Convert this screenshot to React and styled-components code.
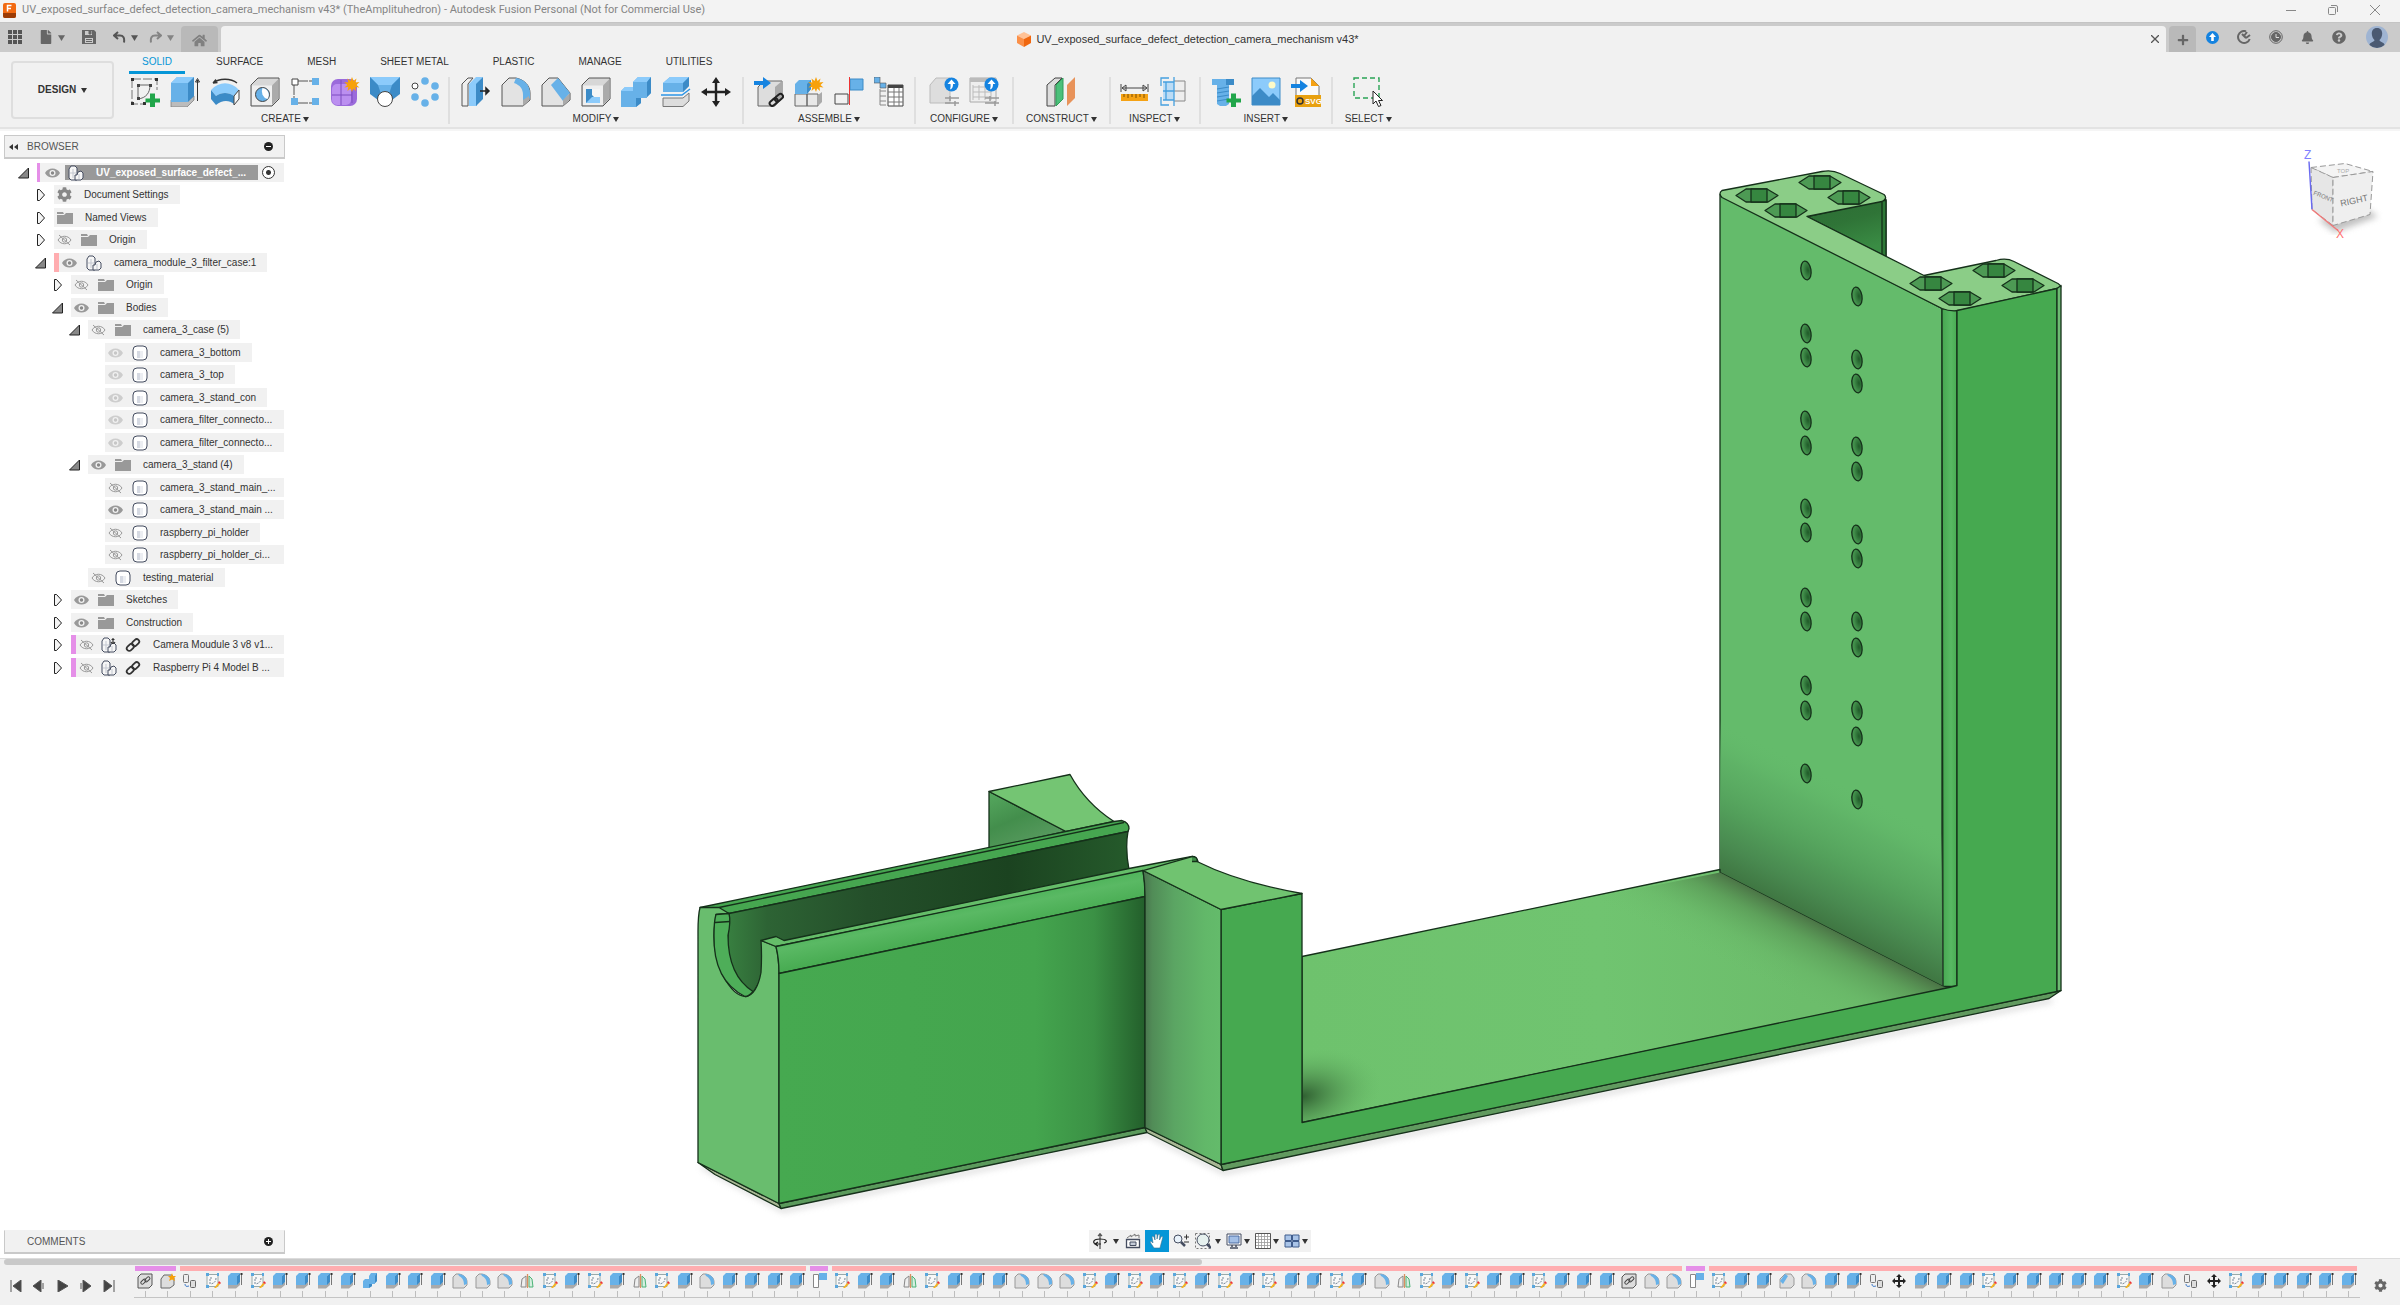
import React from 'react';
import styled, { createGlobalStyle } from 'styled-components';
import { FaBell, FaCog, FaQuestionCircle, FaHome, FaFile, FaPlus } from 'react-icons/fa';

const GlobalStyle = createGlobalStyle`
    * {
        box-sizing: border-box;
    }
    body {
        margin: 0;
        background: #fff;
        color: #333;
        font: 11px/14px 'Liberation Sans', Arial, sans-serif;
    }
    button {
        padding: 0;
        border: none;
        background: none;
        color: inherit;
        font: inherit;
        cursor: pointer;
    }
    svg {
        display: block;
        flex-shrink: 0;
    }
    ul {
        margin: 0;
        padding: 0;
        list-style: none;
    }
`;

const Page = styled.div`
    display: flex;
    flex-direction: column;
    min-height: 100vh;
`;

/* ---------- title bar ---------- */

const TitleBar = styled.header`
    display: flex;
    align-items: center;
    height: 22px;
    padding: 0 20px 2px 3px;
    background: #f3f3f3;
    color: #858585;
    font: 11px/16px Roboto, 'Open Sans', sans-serif;
    .controls {
        display: flex;
        align-items: center;
        gap: 32px;
        margin-left: auto;
    }
`;

const TitleText = styled.span`
    margin-left: 6px;
`;

/* ---------- document tabs ---------- */

const TabStrip = styled.div`
    display: flex;
    align-items: stretch;
    height: 30px;
    padding-top: 3px;
    background: #cbcbcb;
    border-top: 1px solid #c4c4c4;
    color: #666;
`;

const QuickBar = styled.div`
    display: flex;
    align-items: center;
    width: 178px;
    padding: 0 0 4px 8px;
`;

const QuickButton = styled.button`
    display: flex;
    align-items: center;
    gap: 5px;
    margin-right: ${props => props.$gap || 17}px;
    opacity: ${props => (props.$faded ? 0.6 : 1)};
`;

const SquareTab = styled.button`
    display: flex;
    align-items: center;
    justify-content: center;
    width: ${props => props.$width}px;
    padding-top: 2px;
    border-radius: 4px 4px 0 0;
    background: #b9b9b9;
    color: ${props => props.$color};
    margin: 0 3px;
`;

const DocTab = styled.div`
    display: flex;
    flex: 1;
    align-items: center;
    border-radius: 4px 4px 0 0;
    background: #f1f1f1;
    color: #333;
    .name {
        display: flex;
        flex: 1;
        align-items: center;
        justify-content: center;
        gap: 5px;
        padding-left: 11px;
    }
    .close {
        display: flex;
        justify-content: center;
        width: 22px;
    }
`;

const AccountBar = styled.div`
    display: flex;
    align-items: center;
    gap: 18px;
    padding: 0 12px 4px 7px;
    .avatar {
        margin-left: 2px;
    }
`;

/* ---------- ribbon ---------- */

const Ribbon = styled.div`
    display: flex;
    height: 79px;
    padding: 3px 0 0 11px;
    background: #f1f1f1;
    border-bottom: 2px solid #f5f5f5;
    box-shadow: inset 0 -2px #e3e3e3;
`;

const DesignButton = styled.button`
    display: flex;
    align-items: center;
    justify-content: center;
    gap: 5px;
    width: 103px;
    height: 58px;
    margin: 6px 11px 0 0;
    border: 2px solid #dedede;
    border-radius: 4px;
    font-size: 10px;
    font-weight: bold;
`;

const ToolTabs = styled.nav`
    display: flex;
    gap: 18px;
    margin-left: 4px;
`;

const ToolTab = styled.button`
    height: 19px;
    padding: 0 13px 2px;
    font-size: 10px;
    line-height: 14px;
    white-space: nowrap;
    color: ${props => (props.$active ? '#0696d7' : '#333')};
    border-bottom: 3px solid ${props => (props.$active ? '#0696d7' : 'transparent')};
`;

const ToolGroups = styled.div`
    display: flex;
    margin-top: 3px;
`;

const ToolGroup = styled.section`
    display: flex;
    flex-direction: column;
    align-items: center;
    height: 47px;
    padding: 0 ${props => props.$pad}px;
    border-right: ${props => (props.$last ? 0 : 2)}px solid #dfdfdf;
    &:first-child {
        padding-right: 3px;
    }
    .icons {
        display: flex;
    }
`;

const ToolButton = styled.button`
    display: flex;
    justify-content: center;
    width: 40px;
    height: 31px;
`;

const GroupLabel = styled.button`
    display: flex;
    align-items: center;
    gap: 2px;
    margin-top: 4px;
    font-size: 10px;
    white-space: nowrap;
`;

/* ---------- workspace ---------- */

const Workspace = styled.main`
    display: grid;
    flex: 1;
    > * {
        grid-area: 1 / 1;
    }
`;

const Viewport = styled.svg`
    width: 100%;
    height: 100%;
`;

const Overlay = styled.div`
    display: flex;
    flex-direction: column;
    justify-content: space-between;
    padding: 4px;
`;

const PanelHeader = styled.div`
    display: flex;
    align-items: center;
    width: 281px;
    height: 24px;
    padding: 0 11px 0 ${props => (props.$plain ? 22 : 3)}px;
    border: 1px solid #c9c9c9;
    border-bottom-width: 2px;
    border-top-color: ${props => (props.$plain ? '#f1f1f1' : '#c9c9c9')};
    background: #f1f1f1;
    color: #555;
    gap: 8px;
    h2 {
        flex: 1;
        margin: 0;
        font-size: 10px;
        font-weight: normal;
    }
`;

const Tree = styled.ul`
    width: 280px;
    padding-top: 4px;
`;

const TreeRow = styled.li`
    display: flex;
    align-items: center;
    height: 19px;
    margin-bottom: 3px;
    padding-left: ${props => props.$level * 17 + 13}px;
    font-size: 10px;
    &:nth-child(even) {
        margin-bottom: 4px;
    }
`;

const Toggle = styled.button`
    display: flex;
    flex-shrink: 0;
    width: 20px;
    visibility: ${props => (props.$hidden ? 'hidden' : 'visible')};
`;

const Chip = styled.div`
    display: flex;
    flex: ${props => (props.$fill ? '1 1 0' : '0 0 auto')};
    align-items: center;
    min-width: 0;
    height: 19px;
    padding: 0 ${props => (props.$fill ? 9 : 11)}px 0 ${props => (props.$root ? 5 : 3)}px;
    border-left: ${props => (props.$stripe ? (props.$root ? 3 : 5) : 0)}px solid ${props => props.$stripe};
    background: #f1f1f1;
    white-space: nowrap;
`;

const EyeButton = styled.button`
    flex-shrink: 0;
    width: 15px;
    margin-right: ${props => (props.$near ? 7 : 9)}px;
`;

const LinkMark = styled.span`
    margin-left: 8px;
`;

const RowName = styled.span`
    margin-left: 12px;
`;

const RootName = styled.span`
    display: flex;
    flex: 1;
    align-items: center;
    height: 15px;
    margin: 0 4px 0 -4px;
    padding-left: 3px;
    background: #999;
    color: #fff;
    font-weight: bold;
`;

const ActiveRadio = styled.input`
    appearance: none;
    flex-shrink: 0;
    width: 13px;
    height: 13px;
    margin: 0;
    border: 1px solid #333;
    border-radius: 50%;
    background: radial-gradient(circle, #333 0 2px, #fff 3px);
`;

const BottomRow = styled.div`
    display: grid;
    grid-template-columns: 1fr auto 1fr;
    align-items: start;
    height: 24px;
`;

const NavBar = styled.div`
    display: flex;
    height: 22px;
    background: #f1f1f1;
`;

const NavButton = styled.button`
    display: flex;
    align-items: center;
    justify-content: center;
    gap: ${props => props.$gap || 2}px;
    width: ${props => props.$width}px;
    background: ${props => (props.$active ? '#0696d7' : 'transparent')};
`;

/* ---------- timeline ---------- */

const Timeline = styled.footer`
    height: 47px;
    background: #f1f1f1;
    border-top: 1px solid #dcdcdc;
`;

const ScrollTrack = styled.div`
    height: 6px;
    padding-left: 4px;
    .thumb {
        width: 50%;
        height: 6px;
        border-radius: 3px;
        background: #c9c9c9;
    }
`;

const TimelineBody = styled.div`
    display: grid;
    grid-template-columns: 134px 1fr 40px;
`;

const Playback = styled.div`
    display: flex;
    justify-content: space-between;
    height: 12px;
    margin-top: 15px;
    padding: 0 19px 0 10px;
`;

const Features = styled.div`
    display: grid;
    grid-template-columns: repeat(99, 1fr);
    padding-top: 1px;
`;

const Span = styled.div`
    grid-column: span ${props => props.$count};
    height: 5px;
    margin: 0 3px 0 1px;
    background: ${props => props.$color};
`;

const Feature = styled.button`
    display: flex;
    flex-direction: column;
    align-items: center;
    padding-top: 2px;
    border-bottom: 1px solid #c4c4c4;
    &::after {
        content: '';
        width: 1px;
        height: 6px;
        margin-top: 2px;
        background: #bdbdbd;
    }
`;

const GearButton = styled.button`
    display: flex;
    justify-content: center;
    height: 13px;
    margin-top: 14px;
    color: #666;
`;

/* ---------- icons ---------- */

const Caret = ({ size = 6, color = '#333' }) => (
    <svg width={size} height={size} viewBox="0 0 6 6"><path d="M0 1h6L3 6z" fill={color} /></svg>
);

const Svg = ({ size = 30, box = 30, children }) => (
    <svg width={size} height={size} viewBox={`0 0 ${box} ${box}`} fill="none">{children}</svg>
);

const BLUE = '#67b1e8';
const LIGHT = '#8ccbfb';
const DARK = '#3c8bc7';

const Star = () => (
    <path d="M22 0l1.500 4 3-2.500-1 4 4-.5-3 3 3 2.500-4-.5.5 4-2.800-2.500L22 15l-1.500-3.500-3 2.500.8-4-4 .5 3-2.500-3-3 4 .5-.8-4 3 2.500z" fill="#f7a10a" />
);
const Plus = () => <path d="M20 16.500h5v5h5v4h-5v4.500h-5v-4.500h-4.500v-4h4.500z" fill="#21a64a" />;
const Badge = () => (
    <>
        <circle cx="22.500" cy="7.500" r="7" fill="#1583e0" />
        <path d="M22.500 2.500l4 4.500h-2.500c0 3-.5 4.500-3 5.500.7-2 .7-3.500.5-5.500h-3z" fill="#fff" />
    </>
);
const GreyBody = () => (
    <>
        <path d="M1 29V8l7-7h21v21l-7 7z" fill="#d7d7d7" stroke="#555" />
        <path d="M2 28V8.500h20V28z" fill="#efefef" />
        <path d="M22 8.500L28.500 2v19.500L22 28z" fill="#aaa" />
    </>
);

const tools = {
    sketch: (
        <>
            <path d="M2 2h25v11M2 2v25h13" stroke="#777" strokeDasharray="9 2" />
            <path d="M1 1h3v3H1zM25 1h3v3h-3zM1 25h3v3H1zM13 25h3v3h-3z" fill="#333" />
            <path d="M8 9v13M8 8h13M20 8c0 8-4 13-12 14" stroke="#666" />
            <path d="M7 7h3v3H7zM19 7h3v3h-3zM7 20h3v3H7z" fill="#444" />
            <Plus />
        </>
    ),
    extrude: (
        <>
            <path d="M1 23h17l6-4v4l-7 7H1z" fill="#bcbcbc" stroke="#777" strokeWidth=".7" />
            <path d="M1 6l6-6h17l-6 6v19H1z" fill={BLUE} />
            <path d="M1 6l6-6h17l-6 6z" fill={LIGHT} />
            <path d="M18 6l6-6v19l-6 6z" fill={DARK} />
            <path d="M27.500 24V3M25.500 5l2-3.500 2 3.500z" stroke="#333" />
        </>
    ),
    revolve: (
        <>
            <path d="M3 6C9 1 21 1 27 6M3 6l3-3.500M3 6l4.500-.5" stroke="#333" strokeWidth="1.300" />
            <path d="M1 13C9 4 21 4 29 13l-5 6c-5-4-13-4-18 0z" fill={LIGHT} />
            <path d="M1 13l5 6v9l-5-6zM6 19c5-4 13-4 18 0v8c-5-4-12-4-18 1z" fill={DARK} />
            <path d="M24 19l5-6v9l-5 6z" fill="#f8f8f8" stroke="#444" />
        </>
    ),
    hole: (
        <>
            <GreyBody />
            <circle cx="12.500" cy="17.500" r="7" fill={BLUE} stroke="#444" />
            <path d="M12.500 11a7 7 0 0 1 5 11 8 8 0 0 1-5-11z" fill="#fff" />
        </>
    ),
    pattern: (
        <>
            <path d="M4 4h22M4 4v22M4 26h22" stroke="#555" strokeDasharray="14 1" />
            <path d="M2 2h6v6H2z" fill="#fff" stroke="#444" />
            <path d="M22 1h7v7h-7zM1 21h7v7H1zM22 21h7v7h-7z" fill={BLUE} />
        </>
    ),
    form: (
        <>
            <rect x="1" y="2" width="26" height="27" rx="7" fill="#9b6bdb" />
            <rect x="2" y="7" width="19" height="21" rx="5" fill="#bb8ff0" />
            <path d="M11 3v25M2 18h20M22 8v18" stroke="#7c4cc0" />
            <Star />
        </>
    ),
    loft: (
        <>
            <path d="M0 0h30L20 22H10z" fill={BLUE} />
            <path d="M0 0h30l-8 8H8z" fill={LIGHT} />
            <path d="M0 0l8 8 4 12-4 3L0 17zM30 0l-8 8-4 12 4 3 8-6z" fill={DARK} />
            <circle cx="15" cy="22" r="7.500" fill="#fff" stroke="#444" />
        </>
    ),
    circular: (
        <>
            <circle cx="5" cy="9" r="3" fill="#fff" stroke="#444" />
            <g fill={BLUE}>
                <circle cx="15" cy="4" r="3.800" /><circle cx="25" cy="9" r="3.800" /><circle cx="25" cy="20" r="3.800" />
                <circle cx="15" cy="26" r="3.800" /><circle cx="5" cy="20" r="3.800" />
            </g>
        </>
    ),
    press: (
        <>
            <path d="M1 29V7l6-6h5L7 7v22z" fill="#eee" stroke="#555" />
            <path d="M8 29V7l7-7h7l-6 7v22z" fill={LIGHT} />
            <path d="M15 7l7-7v22l-7 7z" fill={DARK} />
            <path d="M19 14h8M25 11l3 3-3 3z" stroke="#222" strokeWidth="1.500" />
        </>
    ),
    fillet: (
        <>
            <path d="M1 29V8l7-7h7c9 2 14 8 14 15v7l-7 6z" fill="#e3e3e3" stroke="#555" />
            <path d="M15 1c8 1 14 7 14 15v5l-7 3v-6c0-6-3-10-9-12z" fill={BLUE} />
            <path d="M22 23l6-4v4l-6 6z" fill="#aaa" />
        </>
    ),
    chamfer: (
        <>
            <path d="M1 29V8l7-7h9l12 15v7l-7 6z" fill="#e3e3e3" stroke="#555" />
            <path d="M10 8l7-7 12 15-7 8z" fill={BLUE} />
            <path d="M22 23l6-6v6l-6 6z" fill="#aaa" />
        </>
    ),
    shell: (
        <>
            <GreyBody />
            <path d="M5 12h14v14H5z" fill={DARK} />
            <path d="M11 12h8v9h-5l-3-3z" fill="#f5f5f5" />
            <path d="M5 26l6-6h8v6z" fill={LIGHT} />
        </>
    ),
    combine: (
        <>
            <path d="M0 30V14l4-4h8V5l5-5h13v16l-5 5h-5v5l-5 4z" fill={BLUE} />
            <path d="M12 5l5-5h13l-4 5zM0 14l4-4h8v4z" fill={LIGHT} />
            <path d="M26 5l4-5v16l-5 5h-5v5l-5 4V21h11z" fill={DARK} />
        </>
    ),
    split: (
        <>
            <path d="M2 6l7-6h19v9l-6 6H2z" fill={BLUE} />
            <path d="M2 6l7-6h19l-6 6z" fill={LIGHT} />
            <path d="M22 6l6-6v9l-6 6z" fill={DARK} />
            <path d="M0 18h21l8-6" stroke="#2c95e6" strokeWidth="1.500" />
            <path d="M2 21h20l6-5v8l-6 5.500H2z" fill="#ddd" stroke="#777" />
        </>
    ),
    move: (
        <path d="M15 0l4 6h-2.800v7.800H24V11l6 4-6 4v-2.800h-7.800V24H19l-4 6-4-6h2.800v-7.800H6V19l-6-4 6-4v2.800h7.800V6H11z" fill="#222" />
    ),
    insertPart: (
        <>
            <path d="M4 29V10l6-6h18v17l-7 8z" fill="#ddd" stroke="#666" />
            <path d="M21 10l7-6v17l-7 8z" fill="#aaa" />
            <path d="M0 4h9V0l8 6-8 6V8H0z" fill="#1583e0" />
            <g stroke="#222" strokeWidth="2"><rect x="15" y="23" width="9" height="5" rx="2.500" transform="rotate(-40 19 25)" /><rect x="20" y="18" width="9" height="5" rx="2.500" transform="rotate(-40 25 20)" /></g>
        </>
    ),
    newPart: (
        <>
            <path d="M1 17h12v12H1zM13 17h11v12H13z" fill="#e8e8e8" stroke="#666" />
            <path d="M24 18l4-3v10l-4 4z" fill="#aaa" />
            <path d="M1 7l4-4h12v9l-4 5H1z" fill={BLUE} />
            <path d="M13 7l4-4v9l-4 5z" fill={DARK} />
            <Star />
        </>
    ),
    joint: (
        <>
            <path d="M16 2h13v11H16z" fill={BLUE} stroke={DARK} />
            <path d="M1 17h13v10H1z" stroke="#444" />
            <path d="M15.500 0v28" stroke="#e33" />
        </>
    ),
    table: (
        <>
            <path d="M0 0h6v6H0zM6 6h6v5H6z" fill={BLUE} stroke="#555" strokeWidth=".6" />
            <path d="M6 12v16M6 14h6M6 19h6M6 24h6M6 28h6" stroke="#888" />
            <path d="M14 8h15v21H14z" fill="#fff" stroke="#444" />
            <path d="M14 8h15v3H14z" fill="#444" />
            <path d="M14 15h15M14 20h15M14 25h15M20 11v18M25 11v18" stroke="#777" />
        </>
    ),
    configure: (
        <>
            <path d="M1 26V8l6-7h14v25z" fill="#ddd" stroke="#bbb" />
            <path d="M16 21h14M16 26h14M21 19v5M26 24v5" stroke="#999" strokeWidth="1.500" />
            <Badge />
        </>
    ),
    configTable: (
        <>
            <path d="M1 1h26v24H1z" fill="#eee" stroke="#aaa" />
            <path d="M1 1h26v4H1z" fill="#bbb" />
            <path d="M4 10h18M4 15h18M4 20h18M4 8v15M10 8v15M16 8v15M22 8v15" stroke="#bbb" />
            <path d="M16 21h14M16 26h14M21 19v5M26 24v5" stroke="#999" strokeWidth="1.500" />
            <Badge />
        </>
    ),
    plane: (
        <>
            <path d="M1 8l8-7h7L9 8v21H1z" fill="#ddd" stroke="#444" />
            <path d="M10 8l7-7v21l-7 7z" fill="#4bc07a" stroke="#2f9d59" />
            <path d="M21 8l8-8v21l-8 8z" fill="#e8935a" />
        </>
    ),
    measure: (
        <>
            <path d="M1 7v8M28 7v8M2 11h25M6 8l-4 3 4 3zM23 8l4 3-4 3z" stroke="#444" />
            <path d="M1 17h27v7H1z" fill="#f5a214" />
            <path d="M4 17v3M8 17v4M12 17v3M16 17v4M20 17v3M24 17v4" stroke="#7a4d00" />
        </>
    ),
    section: (
        <>
            <path d="M14 4h11v20H14M14 14h11" fill="#eee" stroke="#888" />
            <path d="M3 5h11v18H3z" fill="#bcdcf5" />
            <path d="M9 1H1v8M1 20v8h8M14 0v29M3 5h11M3 14h11M3 23h11M6 5v18" stroke="#45a0df" strokeWidth="1.300" />
        </>
    ),
    bolt: (
        <>
            <path d="M1 2h22v6H1z" fill={BLUE} />
            <path d="M15 2h8v6h-8z" fill={DARK} />
            <path d="M6 8h12v19l-3 2H9l-3-2z" fill={BLUE} />
            <path d="M6 12l12-2M6 16l12-2M6 20l12-2M6 24l12-2" stroke={DARK} />
            <Plus />
        </>
    ),
    image: (
        <>
            <path d="M1 1h28v27H1z" fill={LIGHT} stroke={DARK} />
            <circle cx="21" cy="8" r="3.500" fill="#fdfbc8" />
            <path d="M1 19l8-8 9 9 4-4 7 7v5H1z" fill={DARK} />
        </>
    ),
    svgFile: (
        <>
            <path d="M5 1h15l8 8v18H5z" fill="#fafafa" stroke="#777" />
            <path d="M20 1l8 8h-8z" fill="#f5a214" />
            <path d="M0 7h9V3l8 6-8 6v-4H0z" fill="#1583e0" />
            <rect x="4" y="18" width="26" height="12" fill="#e8a110" />
            <circle cx="9" cy="24" r="3" stroke="#333" strokeWidth="1.500" />
            <text x="14" y="27" fontSize="8" fontWeight="bold" fill="#fff">SVG</text>
        </>
    ),
    select: (
        <>
            <path d="M1 1h25v20H1z" stroke="#2aa455" strokeWidth="1.400" strokeDasharray="5 3" />
            <path d="M20 14v13l3-3 2.500 5.500 2.500-1-2.500-5h4z" fill="#fff" stroke="#222" />
        </>
    ),
};

// small feature icons of the timeline
const features = {
    L: (
        <>
            <path d="M1 15V4l3-3h11v11l-3 3z" fill="#ddd" stroke="#555" />
            <g stroke="#444"><rect x="3.500" y="7.500" width="6" height="3" rx="1.500" transform="rotate(-45 6 9)" /><rect x="7" y="5" width="6" height="3" rx="1.500" transform="rotate(-45 10 6)" /></g>
        </>
    ),
    N: (
        <>
            <path d="M1 15V6l3-4h8l2 3v7l-4 3z" fill="#ddd" stroke="#666" />
            <path d="M12 0l1 3h3l-2 2 1 3-3-1.500L9 8l1-3-2-2h3z" fill="#f7a10a" />
        </>
    ),
    C: (
        <>
            <rect x="1.500" y="1.500" width="5" height="8" rx="1" fill="#eee" stroke="#777" />
            <rect x="8.500" y="7.500" width="5" height="7" rx="1" fill="#ddd" stroke="#666" />
            <path d="M3 11c0 2 1 3 4 2" stroke="#3d79c8" />
        </>
    ),
    S: (
        <>
            <path d="M2 1.500h11v12H2z" fill="#f8f8f8" stroke="#9aa" />
            <path d="M1 0h3v3H1zM12 0h2v3h-2zM1 12h3v3H1z" fill="#5aa7dd" />
            <path d="M5 11V5h3M11 5c0 4-2 5-5 6" stroke="#789" strokeDasharray="2 1" />
            <path d="M9 15l4-5 2 1-4 4z" fill="#f6b420" />
            <path d="M13 10l1-2 2 2-1 1z" fill="#e33" />
        </>
    ),
    E: (
        <>
            <path d="M1 11h9l3-2v3l-4 3.500H1z" fill="#aaa" />
            <path d="M1 3l3-3h9l-3 3v9H1z" fill={BLUE} />
            <path d="M10 3l3-3v9l-3 3z" fill={DARK} />
            <path d="M14.500 2v10" stroke="#777" />
            <path d="M13.500 0h2v2h-2z" fill="#333" />
        </>
    ),
    B: (
        <>
            <path d="M1 15V8l2-2h4V3l2-3h6v8l-3 3h-2v2l-3 2z" fill={BLUE} />
            <path d="M13 3l2-3v8l-3 3h-2v2l-3 2v-4h6z" fill={DARK} />
        </>
    ),
    F: (
        <>
            <path d="M1 15V4l3-3h3c5 1 8 4 8 8v3l-3 3z" fill="#ddd" stroke="#999" />
            <path d="M6 1c6 0 9 4 9 8v2l-3 1c0-4-1-7-5-9z" fill={BLUE} />
        </>
    ),
    H: (
        <>
            <path d="M1 15V6l5-5h6l3 4v7l-3 3z" fill="#ddd" stroke="#999" />
            <path d="M1 8l5-7 3 2-5 8z" fill={BLUE} />
        </>
    ),
    M: (
        <>
            <path d="M2 14l1-8 4-3v11z" fill="#eee" stroke="#888" />
            <path d="M10 3l3 3 1 8h-4z" fill="#d5eedf" stroke="#4bb377" />
            <path d="M8.500 1v14" stroke="#d9905f" strokeWidth="1.300" />
        </>
    ),
    J: (
        <>
            <path d="M7 0h8v7H7z" fill={BLUE} />
            <path d="M1.500 1.500h5v13h-5z" fill="#fff" stroke="#888" />
        </>
    ),
    V: <path d="M8 1l3 3H9v3h3V5l3 3-3 3V9H9v3h2l-3 3-3-3h2V9H4v2L1 8l3-3v2h3V4H5z" fill="#222" />,
};

const Folder = () => (
    <Svg size={16} box={16}><path d="M0 2h6l1 2H0zM0 5h7l2-2h7v11H0z" fill="#999" /></Svg>
);
const Body = () => (
    <Svg size={16} box={16}>
        <rect x="1" y="1" width="14" height="14" rx="4" fill="#fff" stroke="#454d60" />
        <path d="M5 6h6v7H5z" fill="#d5d9e2" />
        <path d="M8 6h3v7H8z" fill="#eceef2" />
    </Svg>
);
const Component = ({ anchor }) => (
    <Svg size={16} box={16}>
        <path d="M1 4l2-3h4l2 2v12H3l-2-2z" fill="#f6f6f6" stroke="#454d60" />
        <path d="M7 10h2l1-3 3-1 2 2v5l-2 2H7z" fill="#f6f6f6" stroke="#454d60" />
        <path d="M5 4v9M2 8h6M11 9v5" stroke="#c3c7d0" />
        {anchor && <path d="M12 1v6M10 5c1 2 3 2 4 0M10.500 2.500h3" stroke="#333" strokeWidth="1.200" />}
    </Svg>
);
const Link = () => (
    <svg width="16" height="16" viewBox="0 0 16 16" fill="none" stroke="#333" strokeWidth="1.800">
        <rect x="1" y="8" width="8" height="5" rx="2.500" transform="rotate(-45 5 10)" />
        <rect x="7" y="3" width="8" height="5" rx="2.500" transform="rotate(-45 11 6)" />
    </svg>
);
const Eye = ({ state }) => (
    <Svg size={15} box={15}>
        {state === 'off' ? (
            <g stroke="#999">
                <path d="M1 8c3-5 10-5 13 0-3 5-10 5-13 0zM2 3l11 10" />
                <circle cx="7.500" cy="8" r="2.200" />
            </g>
        ) : (
            <g opacity={state === 'dim' ? 0.4 : 1}>
                <path d="M0 8c3-6 12-6 15 0-3 6-12 6-15 0z" fill="#999" />
                <circle cx="7.500" cy="8" r="3" fill="#f1f1f1" />
                <circle cx="7.500" cy="8" r="1.700" fill="#888" />
            </g>
        )}
    </Svg>
);
const Arrow = ({ open }) => (
    <Svg size={12} box={12}>
        {open
            ? <path d="M11.500 1v10h-10z" fill="#888" stroke="#222" />
            : <path d="M3.500.5h2l5 5.500-5 5.500h-2z" fill="#f4f4f4" stroke="#222" />}
    </Svg>
);

const rowIcons = {
    folder: <Folder />,
    body: <Body />,
    component: <Component />,
    anchored: <Component anchor />,
    gear: <FaCog size={15} color="#888" />,
};

/* ---------- data ---------- */

const tabs = ['SOLID', 'SURFACE', 'MESH', 'SHEET METAL', 'PLASTIC', 'MANAGE', 'UTILITIES'];

const groups = [
    { name: 'CREATE', pad: 0, icons: ['sketch', 'extrude', 'revolve', 'hole', 'pattern', 'form', 'loft', 'circular'] },
    { name: 'MODIFY', pad: 6, icons: ['press', 'fillet', 'chamfer', 'shell', 'combine', 'split', 'move'] },
    { name: 'ASSEMBLE', pad: 5, icons: ['insertPart', 'newPart', 'joint', 'table'] },
    { name: 'CONFIGURE', pad: 8, icons: ['configure', 'configTable'] },
    { name: 'CONSTRUCT', pad: 12, icons: ['plane'] },
    { name: 'INSPECT', pad: 4, icons: ['measure', 'section'] },
    { name: 'INSERT', pad: 5, icons: ['bolt', 'image', 'svgFile'] },
    { name: 'SELECT', pad: 12, icons: ['select'] },
];

const PINK = '#ffadb0';
const PURPLE = '#e58fe8';

const rows = [
    { level: 1, arrow: 'closed', icon: 'gear', name: 'Document Settings' },
    { level: 1, arrow: 'closed', icon: 'folder', name: 'Named Views' },
    { level: 1, arrow: 'closed', eye: 'off', icon: 'folder', name: 'Origin' },
    { level: 1, arrow: 'open', eye: 'on', icon: 'component', name: 'camera_module_3_filter_case:1', stripe: PINK },
    { level: 2, arrow: 'closed', eye: 'off', icon: 'folder', name: 'Origin' },
    { level: 2, arrow: 'open', eye: 'on', icon: 'folder', name: 'Bodies' },
    { level: 3, arrow: 'open', eye: 'off', icon: 'folder', name: 'camera_3_case (5)' },
    { level: 4, eye: 'dim', icon: 'body', name: 'camera_3_bottom' },
    { level: 4, eye: 'dim', icon: 'body', name: 'camera_3_top' },
    { level: 4, eye: 'dim', icon: 'body', name: 'camera_3_stand_con' },
    { level: 4, eye: 'dim', icon: 'body', name: 'camera_filter_connecto...', fill: true },
    { level: 4, eye: 'dim', icon: 'body', name: 'camera_filter_connecto...', fill: true },
    { level: 3, arrow: 'open', eye: 'on', icon: 'folder', name: 'camera_3_stand (4)' },
    { level: 4, eye: 'off', icon: 'body', name: 'camera_3_stand_main_...', fill: true },
    { level: 4, eye: 'on', icon: 'body', name: 'camera_3_stand_main ...', fill: true },
    { level: 4, eye: 'off', icon: 'body', name: 'raspberry_pi_holder' },
    { level: 4, eye: 'off', icon: 'body', name: 'raspberry_pi_holder_ci...', fill: true },
    { level: 3, eye: 'off', icon: 'body', name: 'testing_material' },
    { level: 2, arrow: 'closed', eye: 'on', icon: 'folder', name: 'Sketches' },
    { level: 2, arrow: 'closed', eye: 'on', icon: 'folder', name: 'Construction' },
    { level: 2, arrow: 'closed', eye: 'off', icon: 'anchored', link: true, name: 'Camera Moudule 3 v8 v1...', stripe: PURPLE, fill: true },
    { level: 2, arrow: 'closed', eye: 'off', icon: 'component', link: true, name: 'Raspberry Pi 4 Model B ...', stripe: PURPLE, fill: true },
];

const spans = [[2, PURPLE], [28, PINK], [1, PURPLE], [38, PINK], [1, PURPLE], [29, PINK]];

const history =
    'LNCSESEEEEBEEEFFFMSESEMSEFEEEE' +
    'JSEEMSEEEFFFSESESESESEESEFMSESEESEEE' +
    'LFFJSEEHFEECVEEESEEEEESEFCVSEEEEE';

/* ---------- model ---------- */

const hexes = [[1757, 195], [1820, 182], [1849, 197], [1786, 210], [1931, 283], [1994, 270], [2023, 285], [1960, 298]];
const holes = [
    ...[270, 333, 357, 420, 445, 508, 532, 597, 621, 685, 710, 773].map(y => [1806, y]),
    ...[296, 359, 383, 446, 471, 534, 558, 621, 647, 710, 736, 799].map(y => [1857, y]),
];

const Grad = ({ id, x1 = 0, y1 = 0, x2 = 1, y2 = 0, stops, user }) => (
    <linearGradient id={id} x1={x1} y1={y1} x2={x2} y2={y2} gradientUnits={user ? 'userSpaceOnUse' : 'objectBoundingBox'}>
        {stops.map(([offset, color, opacity = 1]) => (
            <stop key={offset} offset={offset} stopColor={color} stopOpacity={opacity} />
        ))}
    </linearGradient>
);

const Model = () => (
    <Viewport viewBox="0 131 2400 1126" role="img" aria-label="Camera stand model">
        <defs>
            <filter id="soft" x="-10%" y="-10%" width="120%" height="120%"><feGaussianBlur stdDeviation="3" /></filter>
            <Grad id="front" stops={[[0, '#46a950'], [0.7, '#44a54e'], [0.86, '#3b9145'], [1, '#235f2b']]} />
            <Grad id="inner" stops={[[0, '#48704c'], [0.12, '#518c57'], [0.4, '#5ba563'], [0.8, '#62b869'], [1, '#64bb6b']]} />
            <Grad id="rail" user x1={960} y1={905} x2={966} y2={936} stops={[[0, '#4fb45b'], [0.3, '#5ab964'], [1, '#47ab51']]} />
            <Grad id="dark" stops={[[0, '#387f40'], [0.1, '#2d6334'], [0.35, '#244f2a'], [0.7, '#1b4320'], [1, '#255a2b']]} />
            <Grad id="wall" user x1={1831} y1={929} x2={1893} y2={808} stops={[[0, '#3f7642'], [0.2, '#498a50'], [0.45, '#53a05b'], [0.75, '#5cae64', 0.7], [1, '#64bb6b', 0]]} />
            <Grad id="floorShade" user x1={1834} y1={930} x2={1796} y2={1004} stops={[[0, '#4b7446', 1], [0.25, '#579453', 0.7], [0.6, '#62ab60', 0.25], [1, '#6ec26e', 0]]} />
            <Grad id="pocket" x2={0.4} y2={1} stops={[[0, '#2c6c34'], [0.5, '#2f7437'], [1, '#3a8c44']]} />
            <Grad id="back" y2={1} x2={0.6} stops={[[0, '#56a95f'], [0.5, '#438e4c'], [1, '#5a9c61']]} />
            <Grad id="floor" user x1={1302} y1={980} x2={1800} y2={960} stops={[[0, '#6ec26d'], [0.6, '#70c470'], [1, '#6cbd6b']]} />
            <Grad id="edge" stops={[[0, '#46a650'], [0.6, '#58b963'], [1, '#48ac52']]} />
            <radialGradient id="corner" gradientUnits="userSpaceOnUse" cx="0" cy="0" r="1" gradientTransform="translate(1302 1096) rotate(-12) scale(80 46)">
                <stop offset="0" stopColor="#2f5f31" />
                <stop offset=".4" stopColor="#4b8a4b" stopOpacity=".7" />
                <stop offset="1" stopColor="#66b866" stopOpacity="0" />
            </radialGradient>
            <radialGradient id="hole" cx=".7" cy=".5"><stop offset="0" stopColor="#1f5a28" /><stop offset="1" stopColor="#43914c" /></radialGradient>
        </defs>

        <path d="M702 1166L783 1210 1148 1134 1224 1172 2052 1000" fill="none" stroke="#bbb" strokeWidth="4" opacity=".6" filter="url(#soft)" />

        <g stroke="#15301a" strokeWidth="1.300" strokeLinejoin="round">
            {/* chamfers along the underside */}
            <path d="M698 1162L715 1174 781 1208 779 1203z" fill="#a9b795" />
            <path d="M779 1203L781 1208 1147 1132 1145 1127z" fill="#5b9a5c" />
            <path d="M1145 1127L1147 1132 1223 1170 1221 1164z" fill="#a9b795" />
            <path d="M1221 1164L1223 1170 2049 998 2061 990z" fill="#619a5f" />

            {/* tower */}
            <path d="M1807 216L1886 199V256z" fill="url(#pocket)" />
            <path d="M1882 200h4v56l-4-2z" fill="#2e7937" />
            <path d="M1720 194L1942 308V986L1720 872z" fill="#64bb6b" />
            <path d="M1720 700L1942 814V986L1720 872z" fill="url(#wall)" stroke="none" />
            <path d="M1942 308L1957 310V986L1943 986z" fill="url(#edge)" />
            <path d="M1722 190L1822 171q10-2 18 2l44 21q4 4-2 7L1807 216 1924 275 1996 260q10-3 18 1l44 22q6 4-1 5L1964 309q-12 3-22-1L1722 197q-4-4 0-7z" fill="#8bcd87" />
            {hexes.map(([x, y]) => (
                <g key={`${x}-${y}`} transform={`translate(${x} ${y})`}>
                    <path d="M-21 0l10-6.500h21L21 0 11 6.500h-22z" fill="#4d9a54" />
                    <path d="M-6-6.500h16v13H-6z" fill="#368640" />
                </g>
            ))}
            {holes.map(([x, y]) => (
                <ellipse key={`${x}-${y}`} cx={x} cy={y} rx="5" ry="9.500" transform={`rotate(-9 ${x} ${y})`} fill="url(#hole)" />
            ))}

            {/* base */}
            <path d="M1302 956L1720 869V872L1943 986 1949 988 1302 1122z" fill="url(#floor)" />
            <path d="M1720 872L1943 986 1949 988 1640 1052 1500 916z" fill="url(#floorShade)" stroke="none" />
            <path d="M1303 1010h120v86L1303 1121z" fill="url(#corner)" stroke="none" />
            <path d="M1957 310L2057 288V991L1221 1164V909L1302 893V1122L1949 987 1957 985z" fill="#46a950" />
            <path d="M2057 288L2061 285V990L2057 991z" fill="#6dbb72" />

            {/* holder, back part */}
            <path d="M989 791L1066 831 989 848z" fill="url(#back)" />
            <path d="M989 791L1070 774Q1086 803 1114 821L1066 831z" fill="#74c573" />
            <path d="M700 907L1114 821 1122 820Q1129 822 1129 828L1128 831 729 913 715 914z" fill="#46a650" />
            <path d="M719 907L1124 822" fill="none" />
            <path d="M729 913L1128 831Q1125 848 1129 869L784 941 753 992Q724 974 728 937z" fill="url(#dark)" />

            {/* holder, front part */}
            <path d="M700 907L719 907 729 913 716 914Q716 918 715 922 711 950 723 975 734 996 746 996 757 994 761 972 762 955 761 940L776 946Q779 958 779 973V1203L698 1162V931Q698 915 700 907z" fill="#69bd6e" />
            <path d="M716 914L729 913Q731 921 728 935 728 975 753 991 749 996 745 996 713 980 714 935 714 920 716 914z" fill="#4eae59" />
            <path d="M715 922L730 921" />
            <path d="M761 940L776 936 784 940 1129 868 1192 856Q1197 857 1198 861L1143 871 776 946z" fill="#65bd69" />
            <path d="M776 946L1143 870Q1145 882 1145 896L779 973Q779 958 776 946z" fill="url(#rail)" />
            <path d="M779 973L1145 896V1127L779 1203z" fill="url(#front)" />
            <path d="M1143 870Q1145 882 1145 896V1127L1221 1164V909z" fill="url(#inner)" />
            <path d="M1143 870L1192 856Q1196 857 1197 861 1239 882 1302 893L1221 909z" fill="#70c370" />
            <path d="M1192 856q6 0 5 5l-5 0" fill="#3d8d46" />
        </g>

        {/* view cube */}
        <path d="M2318 219L2335 232 2378 216 2366 208z" fill="#999" opacity=".6" filter="url(#soft)" />
        <g stroke="#999" strokeDasharray="6 3">
            <path d="M2311 167L2345 163 2373 171 2333 177z" fill="#f4f4f4" />
            <path d="M2311 167L2333 177V225L2312 209z" fill="#e6e6e6" />
            <path d="M2333 177L2373 171 2370 214 2333 225z" fill="#efefef" />
        </g>
        <path d="M2309 161L2312 209" stroke="#6a6af0" strokeWidth="1.500" />
        <path d="M2312 209L2338 230" stroke="#f07a7a" strokeWidth="1.500" />
        <g fontSize="9" fill="#777">
            <text x="2341" y="206" transform="rotate(-12 2341 206)">RIGHT</text>
            <text x="2313" y="194" fontSize="6" transform="rotate(22 2313 194)">FRONT</text>
            <text x="2337" y="172" fontSize="6" fill="#aaa">TOP</text>
        </g>
        <g fontSize="12">
            <text x="2304" y="158" fill="#8080ff">Z</text>
            <text x="2336" y="237" fill="#ff7070">X</text>
        </g>
    </Viewport>
);

/* ---------- parts ---------- */

const TopBar = () => (
    <>
        <TitleBar>
            <svg width="13" height="15" viewBox="0 0 13 15">
                <rect width="13" height="15" rx="2" fill="#f26a12" />
                <path d="M0 10h13v3q0 2-2 2H2q-2 0-2-2z" fill="#9c3b05" />
                <path d="M4.500 8.500v-6h4M4.500 5.500h3.500" stroke="#fff" strokeWidth="1.500" fill="none" />
            </svg>
            <TitleText>UV_exposed_surface_defect_detection_camera_mechanism v43* (TheAmplituhedron) - Autodesk Fusion Personal (Not for Commercial Use)</TitleText>
            <div className="controls">
                <button aria-label="Minimize"><svg width="10" height="10" stroke="#888"><path d="M0 5.500h10" /></svg></button>
                <button aria-label="Restore">
                    <svg width="10" height="10" fill="none" stroke="#888"><rect x=".5" y="2.500" width="7" height="7" rx="1" /><path d="M3 .5h5q1.500 0 1.500 1.500v5" /></svg>
                </button>
                <button aria-label="Close"><svg width="10" height="10" stroke="#888"><path d="M0 0l10 10M10 0L0 10" /></svg></button>
            </div>
        </TitleBar>
        <TabStrip>
            <QuickBar>
                <QuickButton aria-label="Data panel">
                    <svg width="14" height="14" fill="#555">
                        {[0, 5, 10].map(y => [0, 5, 10].map(x => <rect key={`${x}${y}`} x={x} y={y} width="4" height="4" />))}
                    </svg>
                </QuickButton>
                <QuickButton aria-label="File"><FaFile size={14} /><Caret size={7} color="#666" /></QuickButton>
                <QuickButton aria-label="Save">
                    <svg width="14" height="14" viewBox="0 0 14 14"><path d="M0 0h12l2 2v12H0z" fill="#666" /><path d="M3 1h7v4H3zM3 8h8v5H3z" fill="#cbcbcb" /><path d="M7 1h2v3H7zM4 9.500h6M4 11.500h6" fill="#666" stroke="#666" /></svg>
                </QuickButton>
                <QuickButton aria-label="Undo" $gap={11}>
                    <svg width="13" height="13" viewBox="0 0 13 13" fill="none" stroke="#555" strokeWidth="2"><path d="M5 1L1 4.500 5 8M1.500 4.500H7q5 0 4 7" /></svg>
                    <Caret size={7} color="#555" />
                </QuickButton>
                <QuickButton aria-label="Redo" $gap={0} $faded>
                    <svg width="13" height="13" viewBox="0 0 13 13" fill="none" stroke="#555" strokeWidth="2"><path d="M8 1l4 3.500L8 8M11.500 4.500H6q-5 0-4 7" /></svg>
                    <Caret size={7} color="#555" />
                </QuickButton>
            </QuickBar>
            <SquareTab $width={37} $color="#808080" aria-label="Home"><FaHome size={15} /></SquareTab>
            <DocTab>
                <div className="name">
                    <svg width="14" height="15" viewBox="0 0 14 15">
                        <path d="M7 0l7 3.500L7 7 0 3.500z" fill="#ffc296" /><path d="M0 3.500L7 7v8l-7-4z" fill="#fb9048" /><path d="M14 3.500L7 7v8l7-4z" fill="#f0670f" />
                    </svg>
                    <span>UV_exposed_surface_defect_detection_camera_mechanism v43*</span>
                </div>
                <button className="close" aria-label="Close document"><svg width="8" height="8" stroke="#555" strokeWidth="1.300"><path d="M0 0l8 8M8 0L0 8" /></svg></button>
            </DocTab>
            <SquareTab $width={27} $color="#666" aria-label="New tab"><FaPlus size={12} /></SquareTab>
            <AccountBar>
                <button aria-label="Updates">
                    <svg width="13" height="13" viewBox="0 0 13 13"><circle cx="6.500" cy="6.500" r="6.500" fill="#1583e0" /><path d="M6.500 2l3.500 4H7.800v4H5.200V6H3z" fill="#fff" /></svg>
                </button>
                <button aria-label="Extensions">
                    <svg width="14" height="14" viewBox="0 0 14 14" fill="none" stroke="#666" strokeWidth="2"><path d="M9 1.300A6 6 0 1 0 12.700 9M5 4l4 4M7 6l3-4M9 8l4-3" /></svg>
                </button>
                <button aria-label="Job status">
                    <svg width="14" height="14" viewBox="0 0 14 14" fill="none" stroke="#666"><circle cx="7" cy="7" r="6.300" /><circle cx="7" cy="7" r="4.500" fill="#666" /><path d="M7 4v3.500h3" stroke="#ddd" /></svg>
                </button>
                <button aria-label="Notifications"><FaBell size={13} /></button>
                <button aria-label="Help"><FaQuestionCircle size={14} /></button>
                <button className="avatar" aria-label="Profile">
                    <svg width="22" height="22" viewBox="0 0 22 22"><circle cx="11" cy="11" r="11" fill="#9fb4d2" /><path d="M11 2c7 0 6 9 2.500 12 0 2 5 2 5 5a11 11 0 0 1-15 0c0-3 5-3 5-5C5 11 4 2 11 2z" fill="#4b5a72" /></svg>
                </button>
            </AccountBar>
        </TabStrip>
        <Ribbon>
            <DesignButton>DESIGN<Caret /></DesignButton>
            <div>
                <ToolTabs>
                    {tabs.map((tab, i) => <ToolTab key={tab} $active={i === 0}>{tab}</ToolTab>)}
                </ToolTabs>
                <ToolGroups>
                    {groups.map((group, i) => (
                        <ToolGroup key={group.name} $pad={group.pad} $last={i === groups.length - 1}>
                            <div className="icons">
                                {group.icons.map(icon => <ToolButton key={icon} aria-label={icon}><Svg>{tools[icon]}</Svg></ToolButton>)}
                            </div>
                            <GroupLabel>{group.name}<Caret /></GroupLabel>
                        </ToolGroup>
                    ))}
                </ToolGroups>
            </div>
        </Ribbon>
    </>
);

const Browser = () => (
    <section>
        <PanelHeader>
            <svg width="11" height="8" viewBox="0 0 11 8"><path d="M5 1v6L1 4zM10 1v6L6 4z" fill="#333" /></svg>
            <h2>BROWSER</h2>
            <button aria-label="Collapse"><svg width="9" height="9"><circle cx="4.500" cy="4.500" r="4.500" fill="#222" /><path d="M2 4.500h5" stroke="#fff" /></svg></button>
        </PanelHeader>
        <Tree>
            <TreeRow $level={0}>
                <Toggle aria-label="Collapse document"><Arrow open /></Toggle>
                <Chip $root $fill $stripe={PURPLE}>
                    <EyeButton aria-label="Visibility"><Eye state="on" /></EyeButton>
                    <RootName><Component /><RowName>UV_exposed_surface_defect_...</RowName></RootName>
                    <ActiveRadio type="radio" name="active" aria-label="Activate component" defaultChecked />
                </Chip>
            </TreeRow>
            {rows.map((row, i) => (
                <TreeRow key={i} $level={row.level}>
                    <Toggle $hidden={!row.arrow} aria-label="Expand"><Arrow open={row.arrow === 'open'} /></Toggle>
                    <Chip $stripe={row.stripe} $fill={row.fill}>
                        {row.eye && <EyeButton $near={row.link} aria-label="Visibility"><Eye state={row.eye} /></EyeButton>}
                        {rowIcons[row.icon]}
                        {row.link && <LinkMark><Link /></LinkMark>}
                        <RowName>{row.name}</RowName>
                    </Chip>
                </TreeRow>
            ))}
        </Tree>
    </section>
);

const Navigation = () => (
    <NavBar>
        <NavButton $width={32} $gap={5} aria-label="Orbit">
            <Svg size={16} box={16}><path d="M8 0v16M6 3l2-2 2 2" stroke="#555" strokeWidth="1.300" /><path d="M12 10c4-1 3-4-4-4-7 0-8 4-4 5l5 0M6 9l-3 2 3 2" stroke="#222" strokeWidth="1.200" /></Svg>
            <Caret />
        </NavButton>
        <NavButton $width={24} aria-label="Look at">
            <Svg size={16} box={16}><path d="M1.500 6.500h13v8h-13z" fill="#fff" stroke="#454d60" strokeWidth="1.300" /><path d="M5 9h6v3.500H5z" fill="#c5ccd8" stroke="#454d60" /><path d="M2 5l4-3v2l4-3v2l4-1v3" stroke="#777" /></Svg>
        </NavButton>
        <NavButton $width={24} $active aria-label="Pan">
            <Svg size={16} box={16}><path d="M5 15L1 9c1-1 2 0 3 1L3 4c0-1 1.500-1 2 0l1 3V2c0-1.500 2-1.500 2 0v4l1-4c.5-1 2-1 1.800.5L10.500 7 12 4c.7-1 2-.3 1.700.8L12 11l-1 4z" fill="#fff" stroke="#3c6e8c" strokeWidth=".6" /></Svg>
        </NavButton>
        <NavButton $width={23} aria-label="Zoom">
            <Svg size={16} box={16}><circle cx="5" cy="6" r="4" fill="#e9f2fa" stroke="#454d60" /><path d="M8 9l4 4" stroke="#454d60" strokeWidth="2.500" /><path d="M11 4h5M13.500 1.500v5M11 9h5" stroke="#333" /></Svg>
        </NavButton>
        <NavButton $width={31} $gap={4} aria-label="Fit">
            <Svg size={16} box={16}><path d="M.5.5h14v15H.5z" stroke="#777" strokeDasharray="2 2" /><circle cx="8" cy="7" r="6" fill="#e6f0ee" stroke="#454d60" /><path d="M12 11l4 4" stroke="#454d60" strokeWidth="2.500" /></Svg>
            <Caret />
        </NavButton>
        <NavButton $width={30} aria-label="Display settings">
            <Svg size={16} box={16}><path d="M1 1h14v11H1z" fill="#fff" stroke="#454d60" /><path d="M3 3h10v7H3z" fill="#a3bfe6" stroke="#4a6ba0" /><path d="M6 12v2M10 12v2M4 15h8" stroke="#454d60" strokeWidth="1.500" /></Svg>
            <Caret />
        </NavButton>
        <NavButton $width={28} aria-label="Grid and snaps">
            <Svg size={16} box={16}><path d="M.5.5h15v15H.5z" fill="#fff" stroke="#555" /><path d="M3.500 1v14M6.500 1v14M9.500 1v14M12.500 1v14M1 3.500h14M1 6.500h14M1 9.500h14M1 12.500h14" stroke="#999" strokeWidth=".8" /></Svg>
            <Caret />
        </NavButton>
        <NavButton $width={30} aria-label="Viewports">
            <Svg size={16} box={16}><path d="M1 2h6.500v5.500H1zM8.500 2H15v5.500H8.500zM1 8.500h6.500V14H1zM8.500 8.500H15V14H8.500z" fill="#a9c4e8" stroke="#3f5c8c" /></Svg>
            <Caret />
        </NavButton>
    </NavBar>
);

const App = () => {
    return (
        <Page>
            <GlobalStyle />
            <TopBar />
            <Workspace>
                <Model />
                <Overlay>
                    <Browser />
                    <BottomRow>
                        <PanelHeader $plain>
                            <h2>COMMENTS</h2>
                            <button aria-label="Add comment"><svg width="9" height="9"><circle cx="4.500" cy="4.500" r="4.500" fill="#222" /><path d="M2 4.500h5M4.500 2v5" stroke="#fff" /></svg></button>
                        </PanelHeader>
                        <Navigation />
                    </BottomRow>
                </Overlay>
            </Workspace>
            <Timeline>
                <ScrollTrack><div className="thumb" /></ScrollTrack>
                <TimelineBody>
                    <Playback>
                        {['M1 0v12M3 6l8-6v12z', 'M0 6l8-6v12zM10 3v6', 'M1 0v12l10-6z', 'M1 3v6M3 0v12l8-6z', 'M1 0v12l8-6zM11 0v12'].map((d, i) => (
                            <button key={i} aria-label={`Playback ${i + 1}`}>
                                <svg width="12" height="12" viewBox="0 0 12 12" fill="#444"><path d={d} stroke="#555" /></svg>
                            </button>
                        ))}
                    </Playback>
                    <Features>
                        {spans.map(([count, color], i) => <Span key={i} $count={count} $color={color} />)}
                        {history.split('').map((kind, i) => (
                            <Feature key={i} aria-label={`Feature ${i + 1}`}><Svg size={16} box={16}>{features[kind]}</Svg></Feature>
                        ))}
                    </Features>
                    <GearButton aria-label="Timeline settings"><FaCog size={13} /></GearButton>
                </TimelineBody>
            </Timeline>
        </Page>
    );
};

export default App;
